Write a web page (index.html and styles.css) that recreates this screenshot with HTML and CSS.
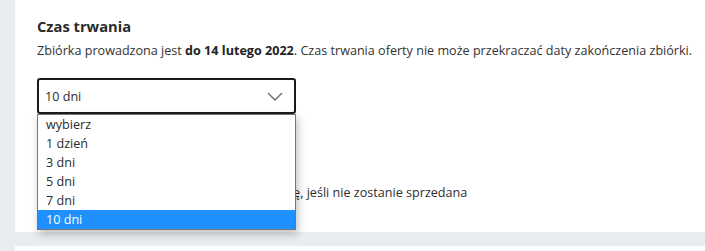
FILE: index.html
```html
<!DOCTYPE html>
<html lang="pl">
<head>
<meta charset="utf-8">
<link rel="stylesheet" href="styles.css">
</head>
<body>
<div class="page">
  <section class="card">
    <h2 class="title">Czas trwania</h2>
    <p class="desc">Zbiórka prowadzona jest <strong>do 14 lutego 2022</strong>. Czas trwania oferty nie może przekraczać daty zakończenia zbiórki.</p>
    <div class="select-wrap">
      <div class="select">
        <span class="select-value">10 dni</span>
        <svg class="chevron" width="16" height="9" viewBox="0 0 16 9"><path d="M1 1 L8 8 L15 1" fill="none" stroke="#6b6b6b" stroke-width="1.4"/></svg>
      </div>
      <ul class="listbox">
        <li class="opt">wybierz</li>
        <li class="opt">1 dzień</li>
        <li class="opt">3 dni</li>
        <li class="opt">5 dni</li>
        <li class="opt">7 dni</li>
        <li class="opt selected">10 dni</li>
      </ul>
    </div>
    <label class="check-row"><span class="checkbox"></span><span class="check-label">Automatycznie wystaw ponownie ofertę, jeśli nie zostanie sprzedana</span></label>
  </section>
  <section class="card next"></section>
</div>
</body>
</html>
```
FILE: styles.css
```css
html, body {
  margin: 0;
  padding: 0;
}
body {
  background: #eaedf0;
  font-family: "Open Sans", "Noto Sans", sans-serif;
  color: #2e2e2e;
  overflow: hidden;
}
.page {
  padding-left: 15px;
}
.card {
  background: #fff;
  height: 232px;
  box-sizing: border-box;
  padding: 16px 8px 0 22px;
}
.card.next {
  margin-top: 14px;
  height: 20px;
}
.title {
  margin: 0;
  font-size: 14.7px;
  line-height: 20px;
  font-weight: 700;
  color: #2b2b2b;
}
.desc {
  margin: 6px 0 0;
  font-size: 12.6px;
  line-height: 18px;
  color: #333;
  white-space: nowrap;
}
.desc strong {
  font-weight: 700;
  color: #222;
}
.select-wrap {
  position: relative;
  width: 259px;
  margin-top: 18px;
}
.select {
  box-sizing: border-box;
  height: 36px;
  border: 2px solid #1a1a1a;
  border-radius: 3px;
  display: flex;
  align-items: center;
  justify-content: space-between;
  padding: 0 11px 0 6px;
  font-size: 12.6px;
}
.chevron {
  display: block;
}
.listbox {
  position: absolute;
  top: 36px;
  left: 0;
  width: 259px;
  box-sizing: border-box;
  margin: 0;
  padding: 0;
  list-style: none;
  background: #fff;
  border: 1px solid #767676;
  box-shadow: 2px 4px 8px rgba(0,0,0,0.25);
  z-index: 2;
}
.opt {
  height: 19px;
  line-height: 19px;
  padding-left: 8px;
  font-size: 12.6px;
  color: #2b2b2b;
}
.opt.selected {
  background: #1e90ff;
  color: #fff;
}
.check-row {
  display: flex;
  align-items: center;
  gap: 13px;
  margin-top: 70px;
  font-size: 12.6px;
  line-height: 18px;
  white-space: nowrap;
}
.checkbox {
  width: 16px;
  height: 16px;
  border: 1px solid #999;
  border-radius: 2px;
  box-sizing: border-box;
  flex: none;
}
```
